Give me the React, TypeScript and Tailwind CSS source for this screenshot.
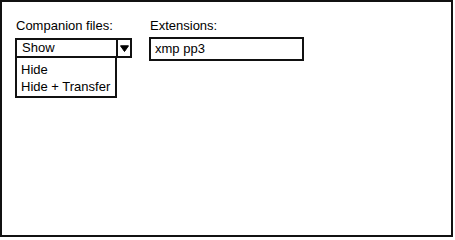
import React from 'react';

const App: React.FC = () => {
  const options = ['Hide', 'Hide + Transfer'];

  return (
    <div
      className="w-[453px] h-[237px] border-2 border-[#111] bg-white flex gap-[17px] pl-[13px] pt-[16px] text-black text-[13px]"
      style={{ fontFamily: '"Liberation Sans", Arial, sans-serif' }}
    >
      {/* companion files dropdown, shown open */}
      <div className="w-[117px] flex flex-col">
        <div className="h-4 leading-4 pl-[1px]">Companion files:</div>
        <div className="mt-1 h-[20px] border-2 border-[#111] flex">
          <div className="flex-1 pl-[5px] leading-4">Show</div>
          <div className="w-[14px] border-l-2 border-[#111] flex items-center justify-center">
            <svg width="9" height="7" viewBox="0 0 9 7">
              <path d="M0.5 0.8 L8.5 0.8 L4.5 6.5 Z" fill="#000" stroke="#000" strokeWidth="1" strokeLinejoin="round" />
            </svg>
          </div>
        </div>
        <div className="w-[102px] border-2 border-t-0 border-[#111] pt-[3px] pb-[1px] pl-[4px]">
          {options.map((opt) => (
            <div key={opt} className="leading-[17px] h-[17px]">
              {opt}
            </div>
          ))}
        </div>
      </div>

      {/* extensions text field */}
      <div className="w-[155px] flex flex-col">
        <div className="h-4 leading-4 pl-[1px]">Extensions:</div>
        <div className="mt-[3px] h-[24px] border-2 border-[#111] flex items-center pl-[4px]">
          xmp pp3
        </div>
      </div>
    </div>
  );
};

export default App;
